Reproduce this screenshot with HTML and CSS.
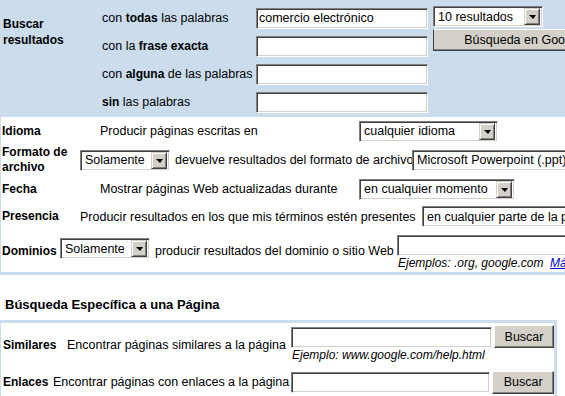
FILE: index.html
```html
<!DOCTYPE html>
<html lang="es">
<head>
  <meta charset="UTF-8">
  <title>Búsqueda avanzada</title>
  <link rel="stylesheet" href="styles.css">
</head>
<body>
<div class="page">
  <div class="words">
    <div class="words-label">Buscar<br>resultados</div>
    <span class="wtext">con <b>todas</b> las palabras</span>
    <input class="field wfield" type="text" value="comercio electrónico">
    <span class="wtext">con la <b>frase exacta</b></span>
    <input class="field wfield" type="text">
    <span class="wtext">con <b>alguna</b> de las palabras</span>
    <input class="field wfield" type="text">
    <span class="wtext"><b>sin</b> las palabras</span>
    <input class="field wfield" type="text">
    <div class="words-side">
      <div class="select sel-num"><span class="val">10 resultados</span><span class="arrow"></span></div>
      <button class="btn btn-google">Búsqueda en Google</button>
    </div>
  </div>

  <div class="opts">
    <div class="opt opt-lang">
      <b class="opt-label lbl-lang">Idioma</b>
      <span class="opt-text txt-lang">Producir páginas escritas en</span>
      <div class="select sel-lang"><span class="val">cualquier idioma</span><span class="arrow"></span></div>
    </div>
    <div class="opt opt-format">
      <b class="opt-label lbl-format">Formato de archivo</b>
      <div class="select sel-only"><span class="val">Solamente</span><span class="arrow"></span></div>
      <span class="opt-text txt-format">devuelve resultados del formato de archivo</span>
      <div class="select sel-ppt"><span class="val">Microsoft Powerpoint (.ppt)</span><span class="arrow"></span></div>
    </div>
    <div class="opt opt-date">
      <b class="opt-label lbl-lang">Fecha</b>
      <span class="opt-text txt-lang">Mostrar páginas Web actualizadas durante</span>
      <div class="select sel-date"><span class="val">en cualquier momento</span><span class="arrow"></span></div>
    </div>
    <div class="opt opt-where">
      <b class="opt-label lbl-where">Presencia</b>
      <span class="opt-text txt-where">Producir resultados en los que mis términos estén presentes</span>
      <div class="select sel-where"><span class="val">en cualquier parte de la página</span><span class="arrow"></span></div>
    </div>
    <div class="opt opt-domain">
      <b class="opt-label lbl-domain">Dominios</b>
      <div class="select sel-dom"><span class="val">Solamente</span><span class="arrow"></span></div>
      <span class="opt-text txt-domain">producir resultados del dominio o sitio Web</span>
      <div class="stack">
        <input class="field dfield" type="text">
        <span class="hint">Ejemplos: .org, google.com&nbsp; <a href="#">Más información</a></span>
      </div>
    </div>
  </div>

  <h3 class="page-title">Búsqueda Específica a una Página</h3>

  <div class="specific">
    <div class="opt opt-similar">
      <b class="opt-label lbl-similar">Similares</b>
      <span class="opt-text txt-similar">Encontrar páginas similares a la página</span>
      <div class="stack">
        <input class="field pfield" type="text">
        <span class="hint">Ejemplo: www.google.com/help.html</span>
      </div>
      <button class="btn btn-find">Buscar</button>
    </div>
    <div class="opt opt-links">
      <b class="opt-label lbl-links">Enlaces</b>
      <span class="opt-text txt-links">Encontrar páginas con enlaces a la página</span>
      <input class="field pfield" type="text">
      <button class="btn btn-find">Buscar</button>
    </div>
  </div>
</div>
</body>
</html>
```

FILE: styles.css
```css
html { overflow: hidden; }
body { margin: 0; background: #fff; color: #000; font-family: "Liberation Sans", Arial, sans-serif; font-size: 12.5px; }
.page { width: 640px; }
b { font-weight: bold; font-size: 12px; }

/* form controls, old windows look */
.field { box-sizing: border-box; height: 21px; margin: 0; padding: 1px 2px; background: #fff; border-top: 1px solid #808080; border-left: 1px solid #808080; border-right: 1px solid #fff; border-bottom: 1px solid #fff; box-shadow: inset 1px 1px 0 #404040, inset -1px -1px 0 #d4d0c8; font-family: "Liberation Sans", Arial, sans-serif; font-size: 12.5px; color: #000; outline: none; }
.select { box-sizing: border-box; display: flex; align-items: center; height: 21px; padding: 0 2px 0 4px; background: #fff; border-top: 1px solid #808080; border-left: 1px solid #808080; border-right: 1px solid #fff; border-bottom: 1px solid #fff; box-shadow: inset 1px 1px 0 #404040, inset -1px -1px 0 #d4d0c8; white-space: nowrap; }
.select .val { flex: 1; overflow: hidden; }
.arrow { box-sizing: border-box; display: flex; align-items: center; justify-content: center; flex: none; width: 16px; height: 17px; background: #d4d0c8; border-top: 1px solid #d4d0c8; border-left: 1px solid #d4d0c8; border-right: 1px solid #404040; border-bottom: 1px solid #404040; box-shadow: inset 1px 1px 0 #fff, inset -1px -1px 0 #808080; }
.arrow::before { content: ""; border-left: 4px solid transparent; border-right: 3px solid transparent; border-top: 4px solid #000; margin-top: 1px; }
.btn { box-sizing: border-box; height: 23px; margin: 0; padding: 0; background: #d4d0c8; border-top: 1px solid #fff; border-left: 1px solid #fff; border-right: 1px solid #404040; border-bottom: 1px solid #404040; box-shadow: inset -1px -1px 0 #808080; font-family: "Liberation Sans", Arial, sans-serif; font-size: 12.5px; color: #000; }

/* search words block */
.words { display: grid; grid-template-columns: 102px 154px 177px auto; grid-template-rows: repeat(4, 28px); align-items: center; padding: 4px 0 1px; background: #cbdced; }
.words-label { grid-column: 1; grid-row: 1 / 3; padding-left: 3px; font-weight: bold; font-size: 12px; line-height: 16px; }
.wtext { grid-column: 2; white-space: nowrap; }
.wfield { grid-column: 3; width: 172px; }
.words-side { grid-column: 4; grid-row: 1 / 3; align-self: start; display: flex; flex-direction: column; gap: 2px; margin-top: 2px; }
.sel-num { width: 110px; }
.btn-google { width: 180px; height: 22px; border-left-color: #404040; }

/* options */
.opts { border-left: 1px solid #cbdced; border-bottom: 3px solid #cbdced; }
.opt { display: flex; align-items: center; }
.opt-label { flex: none; padding-left: 1px; box-sizing: border-box; line-height: 15px; }
.opt-text { flex: none; white-space: nowrap; }
.opt-lang, .opt-date { height: 28px; }
.opt-format { height: 30px; }
.opt-where { height: 27px; }
.opt-domain { height: 42px; }
.lbl-lang { width: 99px; }
.txt-lang { width: 259px; }
.sel-lang { width: 139px; }
.lbl-format { width: 79px; }
.sel-only { width: 90px; }
.txt-format { margin-left: 5px; width: 237px; }
.sel-ppt { width: 200px; }
.sel-date { width: 156px; }
.lbl-where { width: 79px; }
.txt-where { width: 342px; }
.sel-where { width: 220px; }
.lbl-domain { width: 59px; }
.sel-dom { width: 90px; margin-bottom: 5px; }
.txt-domain { margin-left: 5px; width: 242px; }
.stack { display: flex; flex-direction: column; }
.dfield { width: 210px; margin-top: 3px; }
.hint { padding-left: 1px; font-size: 12px; font-style: italic; line-height: 14px; white-space: nowrap; }
.hint a { color: #0000cc; }

.page-title { margin: 0; padding: 22px 0 0 5px; height: 23px; font-size: 13px; line-height: 16px; }

/* page specific block */
.specific { width: 557px; box-sizing: border-box; border-top: 3px solid #cbdced; border-left: 1px solid #cbdced; border-right: 3px solid #cbdced; }
.opt-similar { height: 44px; }
.opt-links { height: 30px; }
.lbl-similar { width: 66px; padding-left: 2px; }
.txt-similar { width: 224px; }
.lbl-links { width: 52px; padding-left: 2px; }
.txt-links { width: 238px; }
.pfield { width: 201px; }
.opt-similar .stack { align-self: start; margin-top: 4px; }
.btn-find { width: 62px; margin-left: 2px; }
.opt-similar .btn-find { align-self: start; margin-top: 2px; }
```
